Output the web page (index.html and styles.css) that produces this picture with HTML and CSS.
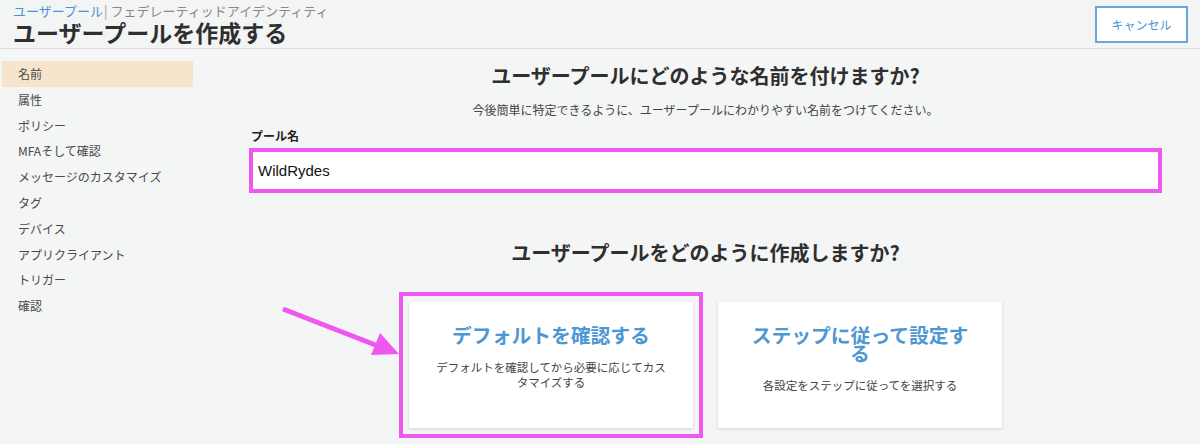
FILE: index.html
```html
<!DOCTYPE html>
<html lang="ja">
<head>
<meta charset="utf-8">
<title>ユーザープールを作成する</title>
<link rel="stylesheet" href="styles.css">
</head>
<body>
<header class="topbar">
  <div class="titles">
    <div class="crumbs"><a class="crumb-link">ユーザープール</a><span class="crumb-sep">|</span><span class="crumb-other">フェデレーティッドアイデンティティ</span></div>
    <h1 class="page-title">ユーザープールを作成する</h1>
  </div>
  <button class="cancel">キャンセル</button>
</header>
<div class="layout">
  <nav class="sidebar">
    <div class="nav-item active">名前</div>
    <div class="nav-item">属性</div>
    <div class="nav-item">ポリシー</div>
    <div class="nav-item">MFAそして確認</div>
    <div class="nav-item">メッセージのカスタマイズ</div>
    <div class="nav-item">タグ</div>
    <div class="nav-item">デバイス</div>
    <div class="nav-item">アプリクライアント</div>
    <div class="nav-item">トリガー</div>
    <div class="nav-item">確認</div>
  </nav>
  <main class="main">
    <h2 class="q-title">ユーザープールにどのような名前を付けますか?</h2>
    <p class="q-sub">今後簡単に特定できるように、ユーザープールにわかりやすい名前をつけてください。</p>
    <label class="field-label">プール名</label>
    <div class="name-input">WildRydes</div>
    <h2 class="q-title second">ユーザープールをどのように作成しますか?</h2>
    <div class="cards">
      <div class="card highlighted">
        <div class="card-title">デフォルトを確認する</div>
        <div class="card-desc">デフォルトを確認してから必要に応じてカスタマイズする</div>
      </div>
      <div class="card">
        <div class="card-title">ステップに従って設定する</div>
        <div class="card-desc">各設定をステップに従ってを選択する</div>
      </div>
    </div>
  </main>
</div>
<svg class="arrow" width="1200" height="444" viewBox="0 0 1200 444">
  <line x1="283" y1="309" x2="378" y2="346" stroke="#ee58f0" stroke-width="5" stroke-linecap="butt"/>
  <polygon points="399,354 371,355 380,333" fill="#ee58f0"/>
</svg>
</body>
</html>
```
FILE: styles.css
```css
* { box-sizing: border-box; }
html, body { margin: 0; padding: 0; }
body {
  background: #f4f5f5;
  font-family: "Noto Sans CJK JP", "Noto Sans", "Liberation Sans", sans-serif;
  color: #333;
  width: 1200px;
  height: 444px;
  overflow: hidden;
  position: relative;
}
.topbar {
  height: 49px;
  border-bottom: 1px solid #dcdddd;
  display: flex;
  justify-content: space-between;
  align-items: flex-start;
  padding: 0 12px 0 13px;
  background: #f3f4f4;
}
.titles { display: flex; flex-direction: column; }
.crumbs {
  font-size: 13px;
  line-height: 16px;
  margin-top: 3px;
  white-space: nowrap;
}
.crumb-link { color: #4a92d6; }
.crumb-sep { color: #999; margin: 0 3px 0 1px; }
.crumb-other { color: #888; }
.page-title {
  margin: 0;
  font-size: 23px;
  line-height: 26px;
  font-weight: 700;
  color: #2f2f2f;
  letter-spacing: 0;
}
.cancel {
  margin-top: 6px;
  width: 93px;
  height: 37px;
  background: #fff;
  border: 2px solid #6aa5dd;
  color: #4a92d6;
  font-family: inherit;
  font-size: 12px;
  padding: 0;
}
.layout { display: flex; }
.sidebar {
  width: 210px;
  padding-top: 12px;
  padding-left: 2px;
}
.nav-item {
  width: 191px;
  height: 25.8px;
  line-height: 25.8px;
  padding-left: 16px;
  font-size: 12px;
  color: #4a4a4a;
}
.nav-item.active { background: #f6e4cd; }
.main {
  flex: 1;
  padding: 0 38px 0 39px;
  display: flex;
  flex-direction: column;
}
.q-title {
  margin: 13px 0 0;
  text-align: center;
  font-size: 20px;
  line-height: 28px;
  font-weight: 700;
  color: #2f2f2f;
}
.q-title.second { margin-top: 46px; }
.q-sub {
  margin: 11px 0 0;
  text-align: center;
  font-size: 12px;
  line-height: 18px;
  color: #444;
}
.field-label {
  margin-top: 8px;
  font-size: 12px;
  line-height: 18px;
  font-weight: 700;
  color: #222;
  padding-left: 2px;
}
.name-input {
  margin-top: 3px;
  height: 45px;
  border: 4px solid #ee58f0;
  background: #fff;
  font-family: "Liberation Sans", Arial, sans-serif;
  font-size: 15px;
  line-height: 37px;
  padding-left: 5px;
  color: #111;
}
.cards {
  margin-top: 35px;
  display: flex;
  justify-content: center;
  gap: 25px;
}
.card {
  width: 284px;
  height: 126px;
  background: #fff;
  box-shadow: 0 1px 3px rgba(0,0,0,0.15);
  padding: 24px 27px 0;
  text-align: center;
}
.card.highlighted {
  outline: 4px solid #ee58f0;
  outline-offset: 6px;
}
.card-title {
  font-size: 19.8px;
  line-height: 18px;
  font-weight: 700;
  color: #4d97d3;
}
.card-desc {
  margin-top: 16px;
  font-size: 11.5px;
  line-height: 15px;
  color: #444;
}
.arrow {
  position: absolute;
  left: 0;
  top: 0;
  pointer-events: none;
}
```
